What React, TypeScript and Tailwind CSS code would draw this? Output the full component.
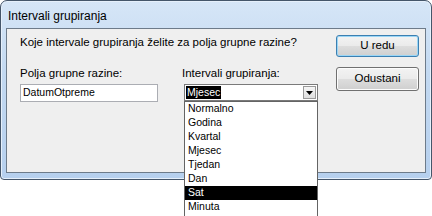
const intervals = ["Normalno", "Godina", "Kvartal", "Mjesec", "Tjedan", "Dan", "Sat", "Minuta"];

function DialogButton({ label, isDefault = false }: { label: string; isDefault?: boolean }) {
  return (
    <button
      className={
        "flex w-[83px] items-center justify-center rounded-[3px] border bg-[linear-gradient(to_bottom,#f3f3f3_0%,#ebebeb_48%,#dddddd_52%,#cfcfcf_100%)] text-[11.5px] leading-none text-black " +
        (isDefault
          ? "h-[22px] border-[#3c7fb1] shadow-[inset_0_0_0_1px_#9ad6f6]"
          : "h-[24px] border-[#707070] shadow-[inset_0_0_0_1px_#fcfcfc]")
      }
    >
      {label}
    </button>
  );
}

export default function App() {
  return (
    <div className="relative h-[216px] w-[432px] overflow-hidden bg-white font-['Liberation_Sans',Arial,sans-serif]">
      <div className="flex h-[180px] w-[432px] flex-col rounded-t-[7px] rounded-b-[4px] border border-[#45566a] bg-[linear-gradient(to_bottom,#d6e6f7_0%,#c3d9f1_40%,#b6d0ee_100%)] shadow-[inset_0_0_0_1px_#e6f0fb]">
        <div className="flex h-[27px] items-center pl-[7px] pt-[2px] text-[12px] text-black">
          Intervali grupiranja
        </div>
        <div className="mx-[5px] flex h-[145px] border border-[#6d7b8a] bg-[#efefef] pl-[13px] pr-[6px] pt-[6px]">
          <div className="flex flex-1 flex-col">
            <p className="text-[11.5px] leading-[14px] text-black">
              Koje intervale grupiranja želite za polja grupne razine?
            </p>
            <div className="mt-[17px] flex">
              <div className="w-[162px]">
                <p className="text-[11.5px] leading-[14px] text-black">Polja grupne razine:</p>
                <div className="mt-[4px] flex h-[18px] w-[138px] items-center border border-[#abadb3] bg-white pl-[2px] text-[10.5px] text-black">
                  DatumOtpreme
                </div>
              </div>
              <div>
                <p className="text-[11.5px] leading-[14px] text-black">Intervali grupiranja:</p>
                <div className="relative ml-[2px] mt-[4px] flex h-[17px] w-[134px] items-center border border-[#7a7a7a] bg-white pl-[1px] pr-[1px]">
                  <span className="flex h-[13px] items-center bg-black px-[1px] text-[10.5px] text-white">Mjesec</span>
                  <span className="ml-auto flex h-[13px] w-[13px] items-center justify-center border border-[#9a9a9a] bg-[linear-gradient(to_bottom,#f6f6f6,#dedede)]">
                    <svg width="7" height="4" viewBox="0 0 7 4">
                      <path d="M0 0h7L3.5 4z" fill="#000" />
                    </svg>
                  </span>
                  <div className="absolute left-[-1px] top-[16px] h-[120px] w-[134px] border border-[#646464] bg-white">
                    {intervals.map((item) => (
                      <div
                        key={item}
                        className={
                          "flex h-[14px] items-center pl-[3px] text-[10.5px] " +
                          (item === "Sat" ? "bg-black text-white" : "text-black")
                        }
                      >
                        {item}
                      </div>
                    ))}
                  </div>
                </div>
              </div>
            </div>
          </div>
          <div className="flex w-[83px] flex-col items-center gap-[10px]">
            <DialogButton label="U redu" isDefault />
            <DialogButton label="Odustani" />
          </div>
        </div>
      </div>
    </div>
  );
}
